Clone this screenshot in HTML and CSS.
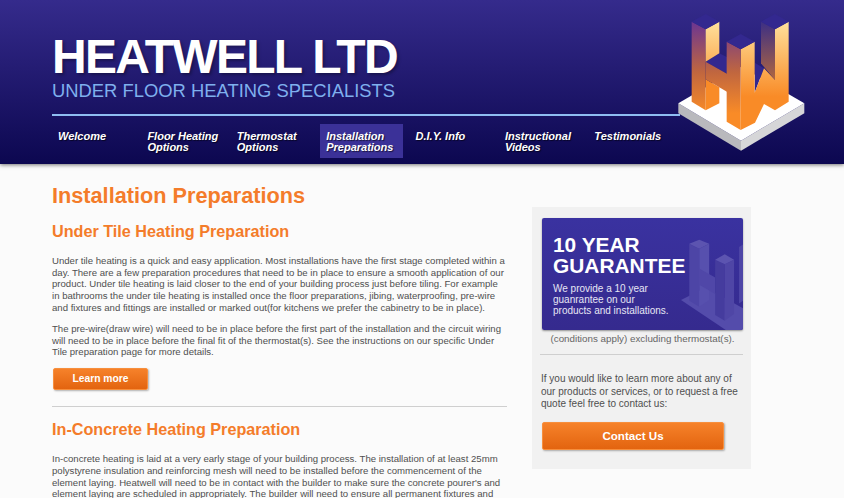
FILE: index.html
```html
<!DOCTYPE html>
<html lang="en">
<head>
  <meta charset="UTF-8">
  <meta name="viewport" content="width=device-width, initial-scale=1.0">
  <title>Installation Preparations</title>
  <link rel="stylesheet" href="styles.css">
</head>
<body>

  <header class="header">
    <div class="brand">HEATWELL LTD</div>
    <div class="tagline">UNDER FLOOR HEATING SPECIALISTS</div>
    <nav class="nav">
      <a href="#">Welcome</a>
      <a href="#">Floor Heating Options</a>
      <a href="#">Thermostat Options</a>
      <a href="#" class="active">Installation Preparations</a>
      <a href="#">D.I.Y. Info</a>
      <a href="#">Instructional Videos</a>
      <a href="#">Testimonials</a>
    </nav>

    <svg class="logo" viewBox="0 0 612 510" width="204" height="170">
      <defs>
        <linearGradient id="leftFace" x1="0" y1="65" x2="0" y2="340" gradientUnits="userSpaceOnUse">
          <stop offset="0" stop-color="#6b3592"/>
          <stop offset="0.55" stop-color="#c0663f"/>
          <stop offset="1" stop-color="#f98b27"/>
        </linearGradient>
        <linearGradient id="rightFace" x1="0" y1="65" x2="0" y2="290" gradientUnits="userSpaceOnUse">
          <stop offset="0" stop-color="#ffe19c"/>
          <stop offset="1" stop-color="#f98b27"/>
        </linearGradient>
        <linearGradient id="farFace" x1="0" y1="65" x2="0" y2="240" gradientUnits="userSpaceOnUse">
          <stop offset="0" stop-color="#3c2f85"/>
          <stop offset="1" stop-color="#b0663f"/>
        </linearGradient>
      </defs>
      <path d="M115 310 L303 422 L303 452 L115 340 Z" fill="#b9b9bd"/>
      <path d="M493 310 L303 422 L303 452 L493 340 Z" fill="#d6d6d8"/>
      <path d="M115 310 L303 200 L493 310 L303 422 Z" fill="#fff"/>

      <!-- H -->
      <path d="M197 185 L238 160 L262 172 L262 222 Z" fill="#33288f"/>
      <path d="M155 65 L197 88 L197 331 L155 305 Z" fill="url(#leftFace)"/>
      <path d="M197 88 L238 65 L238 160 L197 185 Z" fill="url(#rightFace)"/>
      <path d="M197 238 L238 262 L238 310 L197 331 Z" fill="#f98b27"/>
      <path d="M197 185 L262 222 L262 276 L197 238 Z" fill="url(#leftFace)"/>
      <path d="M155 65 L197 42 L238 65 L197 88 Z" fill="#33288f"/>

      <!-- W -->
      <path d="M363 65 L405 88 L405 240 L363 190 Z" fill="url(#farFace)"/>
      <path d="M344 188 L372 205 L344 278 Z" fill="#33288f"/>
      <path d="M372 205 L405 240 L405 88 L446 65 L446 305 L405 331 L372 312 L345 368 L302 390 L302 148 L344 125 L344 278 Z" fill="url(#rightFace)"/>
      <path d="M260 125 L302 148 L302 390 L260 365 Z" fill="url(#leftFace)"/>
      <path d="M260 125 L302 102 L344 125 L302 148 Z" fill="#33288f"/>
      <path d="M363 65 L405 42 L446 65 L405 88 Z" fill="#33288f"/>
    </svg>
  </header>

  <div class="page">
    <main class="content">
      <h1>Installation Preparations</h1>

      <h2>Under Tile Heating Preparation</h2>
      <p>Under tile heating is a quick and easy application. Most installations have the first stage completed within a day. There are a few preparation procedures that need to be in place to ensure a smooth application of our product. Under tile heating is laid closer to the end of your building process just before tiling. For example in bathrooms the under tile heating is installed once the floor preparations, jibing, waterproofing, pre-wire and fixtures and fittings are installed or marked out(for kitchens we prefer the cabinetry to be in place).</p>
      <p>The pre-wire(draw wire) will need to be in place before the first part of the installation and the circuit wiring will need to be in place before the final fit of the thermostat(s). See the instructions on our specific Under Tile preparation page for more details.</p>
      <a href="#" class="btn btn-small">Learn more</a>

      <hr class="rule">

      <h2>In-Concrete Heating Preparation</h2>
      <p>In-concrete heating is laid at a very early stage of your building process. The installation of at least 25mm polystyrene insulation and reinforcing mesh will need to be installed before the commencement of the element laying. Heatwell will need to be in contact with the builder to make sure the concrete pourer's and element laying are scheduled in appropriately. The builder will need to ensure all permanent fixtures and</p>
    </main>

    <aside class="sidebar">
      <div class="banner">
        <svg class="banner-logo" viewBox="465 110 187 280" width="62" height="93">
          <path d="M465 300 L540 262 L652 325 L652 390 L600 390 Z" fill="#544cab"/>
          <path d="M490 130 L520 145 L520 320 L490 302 Z" fill="#4d45a6"/>
          <path d="M520 145 L550 130 L550 300 L520 320 Z" fill="#5750ae"/>
          <path d="M490 130 L520 118 L550 130 L520 145 Z" fill="#5c54b0"/>
          <path d="M520 205 L568 232 L568 282 L520 254 Z" fill="#5047a8"/>
          <path d="M568 178 L597 192 L597 362 L568 345 Z" fill="#453c9e"/>
          <path d="M597 192 L625 178 L625 342 L597 362 Z" fill="#4f46a6"/>
          <path d="M568 178 L597 162 L625 178 L597 192 Z" fill="#5c54b0"/>
          <path d="M640 140 L652 132 L652 302 L640 310 Z" fill="#4d45a6"/>
        </svg>
        <div class="banner-title">10 YEAR<br>GUARANTEE</div>
        <div class="banner-text">We provide a 10 year<br>guanrantee on our<br>products and installations.</div>
      </div>
      <div class="conditions">(conditions apply) excluding thermostat(s).</div>
      <hr class="rule">
      <p class="side-text">If you would like to learn more about any of our products or services, or to request a free quote feel free to contact us:</p>
      <a href="#" class="btn btn-large">Contact Us</a>
    </aside>
  </div>

</body>
</html>
```

FILE: styles.css
```css
html, body {
  height: 100%;
  overflow: hidden;
}

body {
  margin: 0;
  background: #fbfbfb;
  font-family: "Liberation Sans", Arial, sans-serif;
  color: #4f4f4f;
}

.header {
  position: relative;
  height: 164px;
  box-sizing: border-box;
  padding: 32px 0 0 52px;
  background: linear-gradient(#352b8c, #0c0750);
  box-shadow: 0 1px 4px rgba(0, 0, 0, 0.55);
}

.brand {
  font-size: 48px;
  line-height: 49px;
  font-weight: bold;
  letter-spacing: -1.7px;
  color: #fff;
  text-shadow: 2px 2px 3px rgba(0, 0, 0, 0.3);
}

.tagline {
  font-size: 18.4px;
  line-height: 19px;
  color: #7fb0ee;
}

.nav {
  display: flex;
  width: 628px;
  height: 44px;
  margin-top: 14px;
  padding-top: 8px;
  border-top: 2px solid #8fbdf2;
}

.nav a {
  width: 82.4px;
  height: 34px;
  box-sizing: border-box;
  margin-right: 7px;
  padding: 7px 0 0 6px;
  font-size: 11px;
  line-height: 11px;
  font-weight: bold;
  font-style: italic;
  color: #fff;
  text-decoration: none;
  text-shadow: 1px 1px 1px rgba(0, 0, 0, 0.6);
}

.nav a.active {
  background: #3b3198;
}

.logo {
  position: absolute;
  left: 640px;
  top: 0;
}

.page {
  display: flex;
  padding: 0 93px 0 52px;
}

.content {
  width: 455px;
  margin-right: 25px;
}

h1 {
  margin: 19px 0 0;
  font-size: 21.7px;
  line-height: 26px;
  color: #f47c2a;
}

h2 {
  margin: 12px 0 0;
  font-size: 16.2px;
  line-height: 20px;
  color: #f47c2a;
}

.content p {
  margin: 0 0 9.5px;
  font-size: 9.6px;
  line-height: 11.7px;
}

h2 + p {
  padding-top: 14px;
}

.btn {
  display: block;
  box-sizing: border-box;
  border: 1px solid #f78f3d;
  border-radius: 2px;
  background: linear-gradient(#f6822a, #e3640f);
  box-shadow: 1px 1px 2px rgba(0, 0, 0, 0.3);
  color: #fff;
  font-weight: bold;
  text-align: center;
  text-decoration: none;
}

.btn-small {
  width: 95px;
  height: 22px;
  margin: 10px 0 0 1px;
  font-size: 10.3px;
  line-height: 20px;
}

.btn-large {
  width: 182px;
  height: 28px;
  margin-top: 11px;
  font-size: 11.6px;
  line-height: 26px;
}

.rule {
  height: 0;
  margin: 0;
  border: 0;
  border-top: 1px solid #cfcfcf;
}

.content .rule {
  margin-top: 16px;
}

.sidebar {
  width: 219px;
  height: 262px;
  box-sizing: border-box;
  margin-top: 43px;
  padding: 11px 8px 0 10px;
  background: #f1f1f1;
}

.banner {
  position: relative;
  overflow: hidden;
  height: 112px;
  box-sizing: border-box;
  padding: 16px 0 0 11px;
  border-radius: 2px;
  background: linear-gradient(#3a32a0, #352a8e);
  box-shadow: 0 1px 2px rgba(0, 0, 0, 0.4);
  color: #fff;
}

.banner-logo {
  position: absolute;
  right: 0;
  bottom: 0;
}

.banner-title {
  position: relative;
  font-size: 20.9px;
  line-height: 21px;
  font-weight: bold;
}

.banner-text {
  position: relative;
  margin-top: 6.5px;
  font-size: 10px;
  line-height: 11px;
  color: #e6e6f4;
}

.conditions {
  margin-top: 2px;
  font-size: 9.8px;
  line-height: 14px;
  text-align: center;
  color: #666;
}

.sidebar .rule {
  margin: 8px 0 0 -2px;
}

.side-text {
  margin: 18px 0 0 -1px;
  font-size: 10px;
  line-height: 12.6px;
}
```
